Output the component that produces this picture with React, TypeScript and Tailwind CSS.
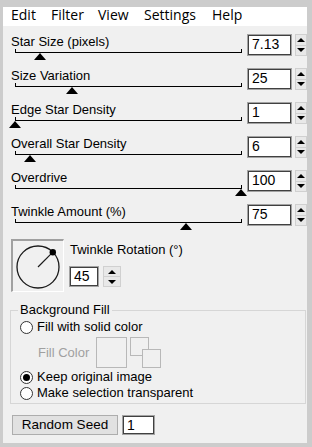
import React from "react";

type Slider = { label: string; value: string; thumb: number };

// thumb = x of the triangle tip, in page pixels
const sliders: Slider[] = [
  { label: "Star Size (pixels)", value: "7.13", thumb: 40 },
  { label: "Size Variation", value: "25", thumb: 72 },
  { label: "Edge Star Density", value: "1", thumb: 15 },
  { label: "Overall Star Density", value: "6", thumb: 30 },
  { label: "Overdrive", value: "100", thumb: 241 },
  { label: "Twinkle Amount (%)", value: "75", thumb: 186 },
];

function Spin({ className }: { className: string }) {
  return (
    <div className={`flex flex-col ${className}`}>
      <div className="flex flex-1 items-center justify-center border border-[#d0d0d0] bg-[#e8e8e8]">
        <span className="h-0 w-0 border-x-[4px] border-b-[4px] border-x-transparent border-b-black" />
      </div>
      <div className="flex flex-1 items-center justify-center border border-t-0 border-[#d0d0d0] bg-[#e8e8e8]">
        <span className="h-0 w-0 border-x-[4px] border-t-[4px] border-x-transparent border-t-black" />
      </div>
    </div>
  );
}

function NumBox({ value, className }: { value: string; className: string }) {
  return (
    <div className={`border border-[#a3a3a3] bg-white ${className}`}>
      <div className="h-full border border-[#404040] pl-[3px] text-[14px] leading-[17px]">{value}</div>
    </div>
  );
}

function Radio({ checked, label }: { checked?: boolean; label: string }) {
  return (
    <div className="flex h-[16px] items-center">
      <span className="ml-[2px] flex h-[13px] w-[13px] items-center justify-center rounded-full border border-[#333] bg-white">
        {checked && <span className="h-[7px] w-[7px] rounded-full bg-black" />}
      </span>
      <span className="ml-[4px] leading-[16px]">{label}</span>
    </div>
  );
}

export default function App() {
  return (
    <div className="h-[447px] w-[312px] bg-[#cccccc] pb-[4px] pl-[3px] pr-[5px] pt-[7px] font-['Liberation_Sans',Arial,sans-serif] text-[13px] text-black">
      <div className="flex h-full flex-col bg-[#f0f0f0]">
        {/* menu */}
        <div className="flex h-[19px] bg-white pl-[8px] font-['Open_Sans',sans-serif] text-[14px] leading-[15px]">
          <span className="w-[40px]">Edit</span>
          <span className="w-[47px]">Filter</span>
          <span className="w-[46px]">View</span>
          <span className="w-[68px]">Settings</span>
          <span>Help</span>
        </div>

        {/* sliders */}
        <div className="pt-[8px]">
          {sliders.map((s) => (
            <div key={s.label} className="relative flex h-[34px]">
              <div className="w-[244px]">
                <div className="h-[15px] pl-[8px] leading-[16px]">{s.label}</div>
                <div className="ml-[12px] h-[4px] w-[227px] border-x border-b border-black" />
              </div>
              <NumBox value={s.value} className="h-[22px] w-[45px]" />
              <Spin className="ml-[3px] h-[22px] w-[12px]" />
              <span
                className="absolute top-[19px] h-0 w-0 border-x-[6px] border-b-[7px] border-x-transparent border-b-black"
                style={{ left: s.thumb - 3 - 6 }}
              />
            </div>
          ))}
        </div>

        {/* twinkle rotation */}
        <div className="flex pl-[8px] pt-[1px]">
          <div className="h-[53px] w-[53px] border-b border-l-2 border-r border-t-2 border-b-white border-l-[#a0a0a0] border-r-white border-t-[#a0a0a0]">
            <svg width="50" height="50" viewBox="0 0 50 50">
              <circle cx="25" cy="26" r="21" fill="none" stroke="#1a1a1a" strokeWidth="1.3" />
              <line x1="25" y1="26" x2="39.8" y2="11.2" stroke="#1a1a1a" strokeWidth="1.2" />
              <circle cx="39.8" cy="11.2" r="3.2" fill="#000" />
            </svg>
          </div>
          <div className="ml-[5px]">
            <div className="mt-[3px] pl-[1px] leading-[16px]">Twinkle Rotation (°)</div>
            <div className="mt-[8px] flex">
              <NumBox value="45" className="h-[21px] w-[30px]" />
              <Spin className="ml-[4px] h-[21px] w-[18px]" />
            </div>
          </div>
        </div>

        {/* background fill */}
        <fieldset className="ml-[7px] mr-[1px] mt-[10px] rounded-none border border-[#d6d6d6] pb-[2px] pl-[7px]">
          <legend className="px-[2px] leading-[16px]">Background Fill</legend>
          <div className="mt-[1px]">
            <Radio label="Fill with solid color" />
          </div>
          <div className="mt-[2px] flex items-center pl-[20px]">
            <span className="w-[58px] text-[#a0a0a0]">Fill Color</span>
            <div className="h-[31px] w-[31px] border border-[#b8b8b8]" />
            <svg className="ml-[3px]" width="31" height="31" viewBox="0 0 31 31">
              <rect x="0.5" y="0.5" width="18" height="18" fill="#f0f0f0" stroke="#b8b8b8" />
              <rect x="12.5" y="12.5" width="18" height="18" fill="#f0f0f0" stroke="#b8b8b8" />
            </svg>
          </div>
          <div className="mt-[1px]">
            <Radio checked label="Keep original image" />
          </div>
          <Radio label="Make selection transparent" />
        </fieldset>

        {/* random seed */}
        <div className="ml-[9px] mt-[11px] flex">
          <button className="h-[20px] w-[106px] border border-[#adadad] bg-[#e1e1e1] text-[13.5px] leading-[18px]">
            Random Seed
          </button>
          <NumBox value="1" className="ml-[4px] h-[20px] w-[33px]" />
        </div>
      </div>
    </div>
  );
}
